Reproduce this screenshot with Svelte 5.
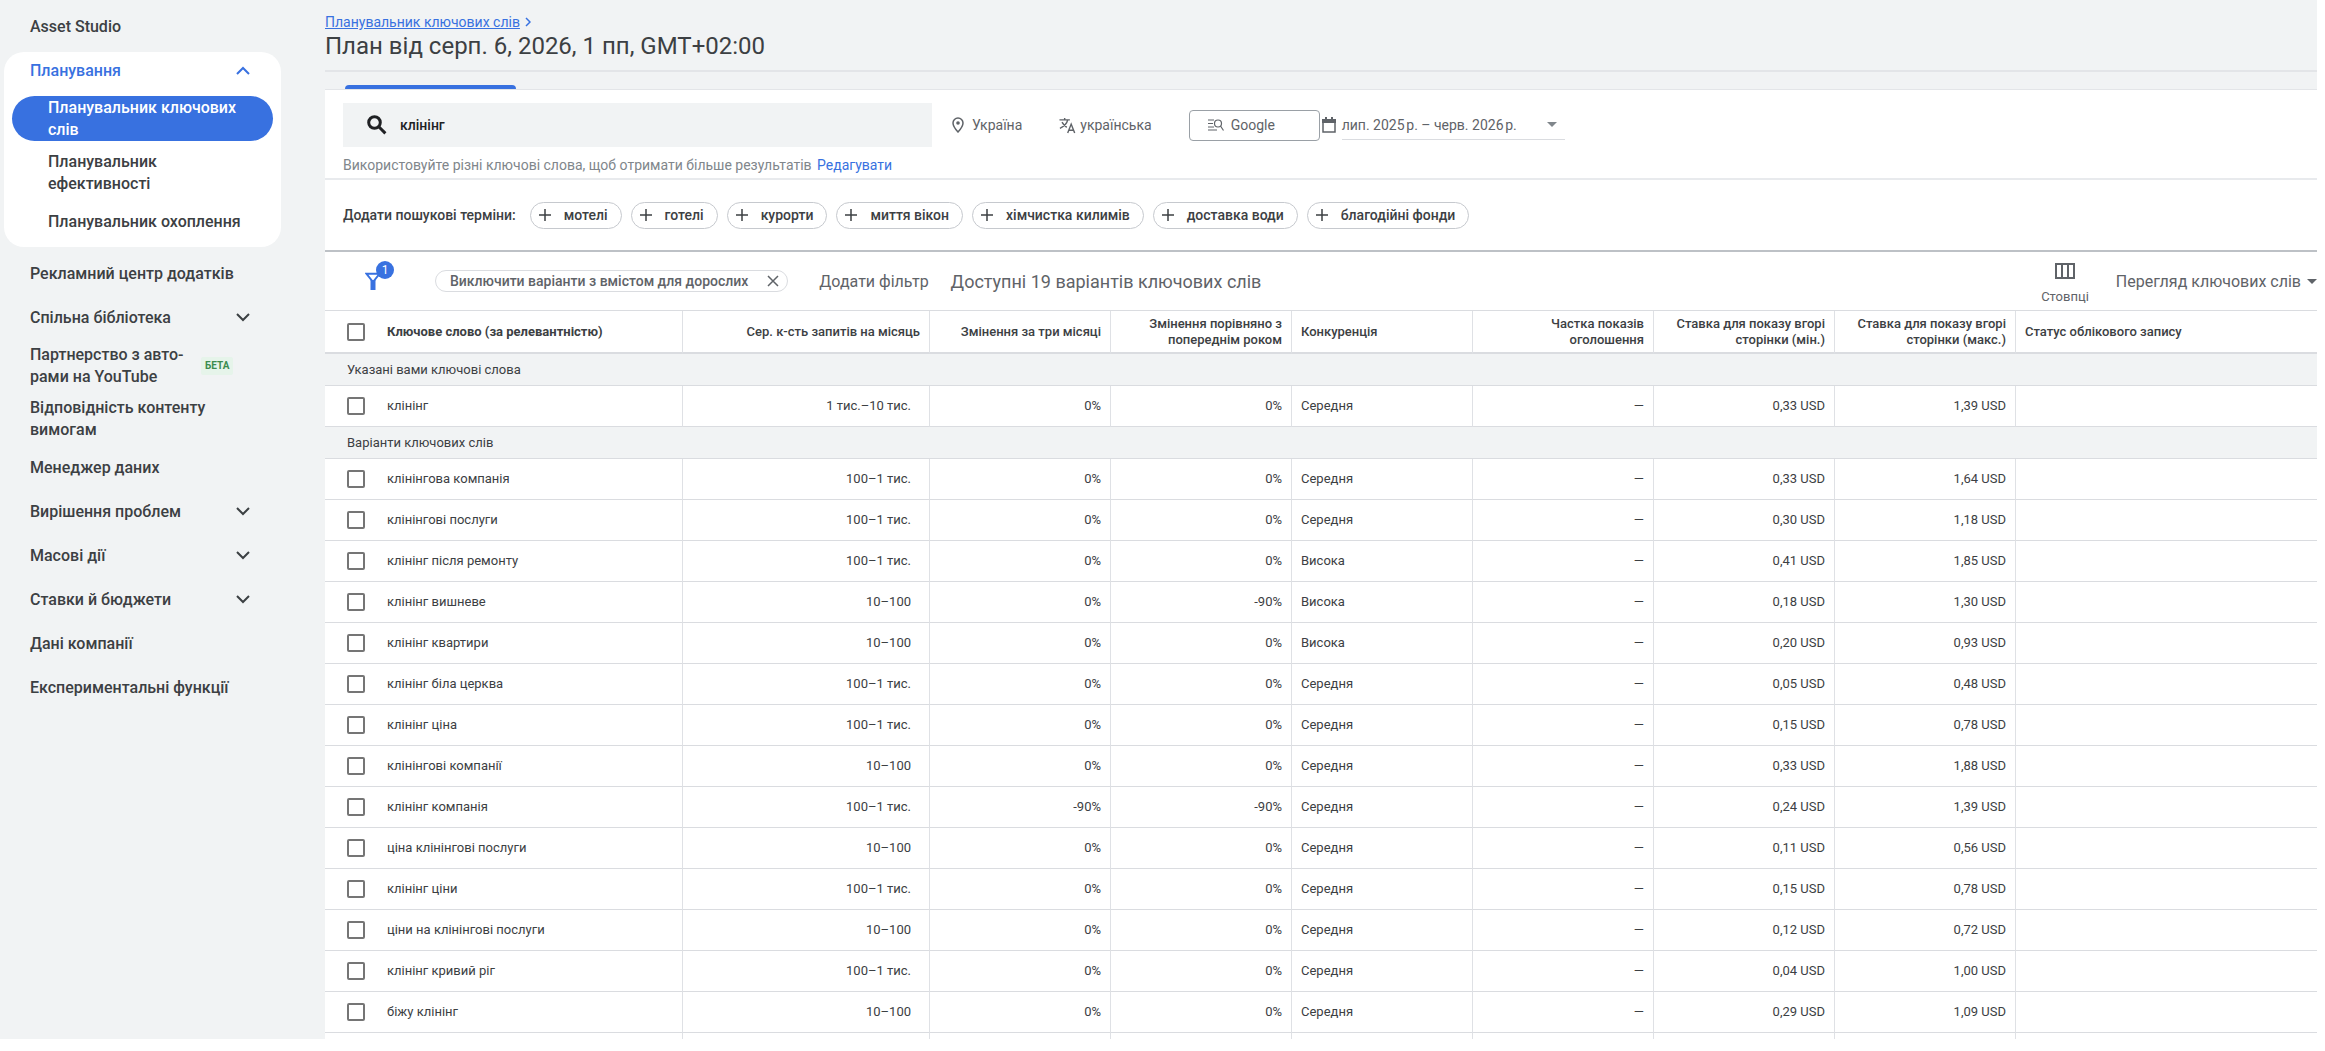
<script>
    let query = 'клінінг';
    let planningOpen = true;
    let filterActive = true;

    const planning = [
        { title: 'Планувальник ключових слів', active: true },
        { title: 'Планувальник ефективності', narrow: true },
        { title: 'Планувальник охоплення' },
    ];

    const menu = [
        { title: 'Рекламний центр додатків' },
        { title: 'Спільна бібліотека', expandable: true },
        { title: 'Партнерство з авто-рами на YouTube', beta: true },
        { title: 'Відповідність контенту вимогам' },
        { title: 'Менеджер даних' },
        { title: 'Вирішення проблем', expandable: true },
        { title: 'Масові дії', expandable: true },
        { title: 'Ставки й бюджети', expandable: true },
        { title: 'Дані компанії' },
        { title: 'Експериментальні функції' },
    ];

    const terms = ['мотелі', 'готелі', 'курорти', 'миття вікон', 'хімчистка килимів', 'доставка води', 'благодійні фонди'];

    // keyword, searches, three months, year, competition, low bid, high bid
    const groups = [
        {
            title: 'Указані вами ключові слова',
            rows: [['клінінг', '1 тис.–10 тис.', '0%', '0%', 'Середня', '0,33', '1,39']],
        },
        {
            title: 'Варіанти ключових слів',
            rows: [
                ['клінінгова компанія', '100–1 тис.', '0%', '0%', 'Середня', '0,33', '1,64'],
                ['клінінгові послуги', '100–1 тис.', '0%', '0%', 'Середня', '0,30', '1,18'],
                ['клінінг після ремонту', '100–1 тис.', '0%', '0%', 'Висока', '0,41', '1,85'],
                ['клінінг вишневе', '10–100', '0%', '-90%', 'Висока', '0,18', '1,30'],
                ['клінінг квартири', '10–100', '0%', '0%', 'Висока', '0,20', '0,93'],
                ['клінінг біла церква', '100–1 тис.', '0%', '0%', 'Середня', '0,05', '0,48'],
                ['клінінг ціна', '100–1 тис.', '0%', '0%', 'Середня', '0,15', '0,78'],
                ['клінінгові компанії', '10–100', '0%', '0%', 'Середня', '0,33', '1,88'],
                ['клінінг компанія', '100–1 тис.', '-90%', '-90%', 'Середня', '0,24', '1,39'],
                ['ціна клінінгові послуги', '10–100', '0%', '0%', 'Середня', '0,11', '0,56'],
                ['клінінг ціни', '100–1 тис.', '0%', '0%', 'Середня', '0,15', '0,78'],
                ['ціни на клінінгові послуги', '10–100', '0%', '0%', 'Середня', '0,12', '0,72'],
                ['клінінг кривий ріг', '100–1 тис.', '0%', '0%', 'Середня', '0,04', '1,00'],
                ['біжу клінінг', '10–100', '0%', '0%', 'Середня', '0,29', '1,09'],
            ],
        },
    ];
</script>

<div class="shell">
    <nav class="sidebar">
        <a href="#studio" class="item">Asset Studio</a>

        <div class="card">
            <button type="button" class="item head" on:click={() => planningOpen = !planningOpen}>
                <span>Планування</span>
                <svg class="chevron" viewBox="0 0 14 9"><path d="M1 8l6-6 6 6" /></svg>
            </button>
            {#if planningOpen}
                {#each planning as item}
                    <a href="#planning" class="sub" class:active={item.active} class:narrow={item.narrow}>{item.title}</a>
                {/each}
            {/if}
        </div>

        {#each menu as item}
            {#if item.expandable}
                <button type="button" class="item">
                    <span>{item.title}</span>
                    <svg class="chevron" viewBox="0 0 14 9"><path d="M1 1l6 6 6-6" /></svg>
                </button>
            {:else}
                <a href="#menu" class="item">
                    <span class:with-badge={item.beta}>{item.title}</span>
                    {#if item.beta}<span class="beta">БЕТА</span>{/if}
                </a>
            {/if}
        {/each}
    </nav>

    <main>
        <header>
            <div class="crumbs">
                <a href="#planner">Планувальник ключових слів</a>
                <svg viewBox="0 0 6 10"><path d="M1 1l4 4-4 4" /></svg>
            </div>
            <h1>План від серп. 6, 2026, 1 пп, GMT+02:00</h1>
        </header>
        <div class="tabs"><span class="tab"></span></div>

        <section class="search">
            <div class="search-row">
                <label class="search-box">
                    <svg viewBox="0 0 20 20"><circle cx="7.5" cy="7.5" r="5.8" /><path d="M11.8 11.8l6.6 6.6" /></svg>
                    <input type="text" aria-label="Ключові слова" bind:value={query}>
                </label>
                <button type="button" class="setting">
                    <svg class="pin" viewBox="0 0 12 16"><path d="M6 1a5 5 0 0 0-5 5c0 3.6 5 9 5 9s5-5.400 5-9a5 5 0 0 0-5-5z" /><circle class="dot" cx="6" cy="6" r="1.8" /></svg>
                    <span>Україна</span>
                </button>
                <button type="button" class="setting language">
                    <svg class="translate" viewBox="0 0 18 18"><path d="M.5 3h11M6 1v2M9.200 3C8.500 6.500 5 10 1 12M3.200 5.500C4.500 8 6 9.500 8.200 11M9.200 17l3.700-9.500L16.600 17M10.400 14h5" /></svg>
                    <span>українська</span>
                </button>
                <button type="button" class="network">
                    <svg viewBox="0 0 16 14"><path d="M0 2h6M0 5.500h5M0 9h6M0 12h9M15.500 12.500L12.500 8" /><circle cx="10" cy="5.500" r="3.500" /></svg>
                    <span>Google</span>
                </button>
                <button type="button" class="dates">
                    <svg class="calendar" viewBox="0 0 14 16"><path d="M1 3h12v12H1z" /><path class="solid" d="M0 2h14v4H0zM3 0h2v3H3zM9 0h2v3H9z" /></svg>
                    <span class="range">
                        <span>лип. 2025&#8239;р. – черв. 2026&#8239;р.</span>
                        <span class="caret"></span>
                    </span>
                </button>
            </div>
            <p class="hint">Використовуйте різні ключові слова, щоб отримати більше результатів <a href="#edit">Редагувати</a></p>
        </section>

        <section class="terms">
            <span class="terms-label">Додати пошукові терміни:</span>
            {#each terms as term}
                <button type="button" class="term">
                    <svg viewBox="0 0 14 14"><path d="M7 1v12M1 7h12" /></svg>
                    {term}
                </button>
            {/each}
        </section>

        <section class="filters">
            <button type="button" class="funnel" aria-label="Фільтри">
                <svg viewBox="0 0 16 18"><path d="M1.500 1.800h13L8 10z" /><path class="solid" d="M5.500 8h5v10h-5z" /></svg>
                <span class="count">1</span>
            </button>
            {#if filterActive}
                <span class="filter-chip">
                    Виключити варіанти з вмістом для дорослих
                    <button type="button" aria-label="Вилучити" on:click={() => filterActive = false}>
                        <svg viewBox="0 0 12 12"><path d="M1 1l10 10M11 1L1 11" /></svg>
                    </button>
                </span>
            {/if}
            <button type="button" class="add-filter">Додати фільтр</button>
            <span class="available">Доступні 19 варіантів ключових слів</span>
            <button type="button" class="columns">
                <svg viewBox="0 0 20 16"><path d="M1 1h18v14H1zM7 1v14M13 1v14" /></svg>
                Стовпці
            </button>
            <button type="button" class="view">
                Перегляд ключових слів
                <span class="caret"></span>
            </button>
        </section>

        <table>
            <colgroup>
                <col class="c-keyword">
                <col class="c-volume">
                <col class="c-value" span="6">
                <col>
            </colgroup>
            <thead>
                <tr>
                    <th class="keyword sorted">
                        <label><input type="checkbox"> Ключове слово (за релевантністю)</label>
                    </th>
                    <th class="num">Сер. к-сть запитів на місяць</th>
                    <th class="num">Змінення за три місяці</th>
                    <th class="num">Змінення порівняно з попереднім роком</th>
                    <th>Конкуренція</th>
                    <th class="num">Частка показів<br>оголошення</th>
                    <th class="num">Ставка для показу вгорі сторінки (мін.)</th>
                    <th class="num">Ставка для показу вгорі сторінки (макс.)</th>
                    <th>Статус облікового запису</th>
                </tr>
            </thead>
            <tbody>
                {#each groups as group}
                    <tr class="group"><td colspan="9">{group.title}</td></tr>
                    {#each group.rows as [keyword, volume, quarter, year, competition, low, high]}
                        <tr>
                            <td class="keyword"><label><input type="checkbox"> {keyword}</label></td>
                            <td class="num volume">{volume}</td>
                            <td class="num">{quarter}</td>
                            <td class="num">{year}</td>
                            <td>{competition}</td>
                            <td class="num">—</td>
                            <td class="num">{low} USD</td>
                            <td class="num">{high} USD</td>
                            <td></td>
                        </tr>
                    {/each}
                {/each}
                <!-- the next row is cut off by the bottom of the list -->
                <tr>
                    <td></td><td></td><td></td><td></td><td></td><td></td><td></td><td></td><td></td>
                </tr>
            </tbody>
        </table>
    </main>
</div>

<style>
    :global(body) {
        background: #fff;
    }

    .shell {
        display: flex;
        height: calc(100vh - 12px);
        margin-right: 8px;
        overflow: hidden;
        background: #f1f3f4;
        font-family: Roboto, "Liberation Sans", sans-serif;
        font-size: 13px;
        color: #3c4043;
    }

    * {
        box-sizing: border-box;
    }

    a {
        color: #3871e0;
        text-decoration: none;
    }

    button {
        padding: 0;
        border: none;
        background: none;
        font: inherit;
        color: inherit;
        text-align: left;
        white-space: nowrap;
        cursor: pointer;
    }

    svg {
        flex: none;
        fill: none;
        stroke: currentColor;
        stroke-width: 2;
    }

    .solid {
        fill: currentColor;
        stroke: none;
    }

    .caret {
        flex: none;
        border: 5px solid transparent;
        border-top-color: currentColor;
        border-bottom: none;
    }

    /* sidebar */
    .sidebar {
        flex: none;
        width: 325px;
        padding: 4px 44px 0 4px;
        font-size: 16px;
        line-height: 22px;
        font-weight: 500;
    }

    .item {
        display: flex;
        align-items: center;
        width: 100%;
        min-height: 44px;
        padding: 5px 31px 4px 26px;
        color: #3c4043;
    }

    .item > span:first-child {
        max-width: 210px;
        white-space: normal;
    }

    .item > span.with-badge {
        width: 158px;
    }

    .card {
        margin: 4px 0;
        padding-bottom: 4px;
        border-radius: 20px;
        background: #fff;
    }

    .item.head {
        min-height: 36px;
        color: #3871e0;
    }

    .chevron {
        width: 14px;
        height: 9px;
        margin-left: auto;
    }

    .sub {
        display: flex;
        align-items: center;
        min-height: 44px;
        margin: 0 8px;
        padding: 5px 28px 4px 36px;
        color: #3c4043;
    }

    .sub.active {
        margin: 8px 8px 5px;
        padding: 1px 28px 0 36px;
        border-radius: 23px;
        background: #3871e0;
        color: #fff;
    }

    .sub.narrow {
        padding-right: 80px;
    }

    .beta {
        margin-left: 13px;
        padding: 0 4px;
        border-radius: 2px;
        background: #e6f4ea;
        font-size: 10px;
        line-height: 18px;
        font-weight: 700;
        color: #3c8c50;
    }

    /* header */
    main {
        flex: 1;
        min-width: 0;
    }

    header {
        height: 72px;
        padding-top: 13px;
        border-bottom: 2px solid #e3e5e8;
    }

    .crumbs {
        display: flex;
        align-items: center;
        gap: 5px;
        font-size: 14px;
        line-height: 18px;
        color: #3871e0;
    }

    .crumbs a {
        text-decoration: underline;
    }

    .crumbs svg {
        width: 6px;
        height: 10px;
        stroke-width: 1.5;
    }

    h1 {
        margin: 0;
        font-size: 24px;
        line-height: 30px;
        font-weight: 400;
    }

    .tabs {
        display: flex;
        align-items: flex-end;
        height: 18px;
        padding-left: 20px;
        border-bottom: 1px solid #e3e5e8;
    }

    .tab {
        width: 171px;
        height: 4px;
        border-radius: 4px 4px 0 0;
        background: #3871e0;
    }

    /* search */
    .search {
        padding: 13px 18px 4px;
        border-bottom: 2px solid #e8eaed;
        background: #fff;
    }

    .search-row {
        display: flex;
        align-items: center;
        font-size: 14px;
        color: #5f6368;
    }

    .search-box {
        display: flex;
        align-items: center;
        gap: 13px;
        width: 589px;
        height: 44px;
        margin-right: 20px;
        padding-left: 24px;
        background: #f1f3f4;
        font-weight: 500;
        color: #202124;
    }

    .search-box svg {
        width: 20px;
        height: 20px;
        stroke-width: 3;
    }

    .search-box input {
        flex: 1;
        padding: 0;
        border: none;
        outline: none;
        background: transparent;
        font: inherit;
        color: inherit;
    }

    .setting {
        display: flex;
        align-items: center;
        gap: 8px;
    }

    .setting svg {
        stroke-width: 1.5;
    }

    .pin {
        width: 12px;
        height: 16px;
    }

    .pin .dot {
        fill: currentColor;
        stroke: none;
    }

    .language {
        gap: 4px;
        margin-left: 37px;
    }

    .translate {
        width: 17px;
        height: 17px;
    }

    .network {
        display: flex;
        align-items: center;
        gap: 7px;
        width: 131px;
        height: 31px;
        margin-left: 37px;
        padding-left: 18px;
        border: 1px solid #9aa0a6;
        border-radius: 4px;
    }

    .network svg {
        width: 16px;
        height: 14px;
        stroke-width: 1.2;
    }

    .dates {
        display: flex;
        align-items: center;
        gap: 6px;
        margin-left: 2px;
    }

    .calendar {
        width: 14px;
        height: 16px;
    }

    .calendar path:first-child {
        stroke-width: 1.5;
    }

    .range {
        display: flex;
        align-items: center;
        justify-content: space-between;
        width: 223px;
        height: 30px;
        padding-right: 8px;
        border-bottom: 1px solid #dadce0;
    }

    .range .caret {
        color: #80868b;
    }

    .hint {
        margin: 9px 0 0;
        font-size: 14px;
        line-height: 18px;
        color: #80868b;
    }

    .hint a {
        margin-left: 2px;
    }

    .terms {
        display: flex;
        align-items: center;
        gap: 9px;
        height: 72px;
        padding: 0 18px;
        border-bottom: 2px solid #bdc1c6;
        background: #fff;
        font-size: 14px;
        font-weight: 500;
    }

    .terms-label {
        margin-right: 5px;
    }

    .term {
        display: flex;
        align-items: center;
        gap: 12px;
        height: 27px;
        padding: 0 13px 0 7px;
        border: 1px solid #c6c9ce;
        border-radius: 14px;
    }

    .term svg {
        width: 14px;
        height: 14px;
        stroke-width: 1.5;
    }

    /* filters */
    .filters {
        display: flex;
        align-items: center;
        height: 58px;
        padding-left: 40px;
        background: #fff;
        font-size: 16px;
        color: #5f6368;
    }

    .funnel {
        position: relative;
        margin-right: 54px;
        color: #3871e0;
    }

    .funnel svg {
        display: block;
        width: 16px;
        height: 18px;
    }

    .count {
        position: absolute;
        top: -11px;
        left: 11px;
        width: 18px;
        border-radius: 9px;
        background: #3871e0;
        font-size: 12px;
        line-height: 18px;
        text-align: center;
        color: #fff;
    }

    .filter-chip {
        display: flex;
        align-items: center;
        gap: 19px;
        height: 22px;
        margin-right: 31px;
        padding: 0 8px 0 14px;
        border: 1px solid #dadce0;
        border-radius: 11px;
        font-size: 14px;
        font-weight: 500;
        white-space: nowrap;
    }

    .filter-chip button {
        display: flex;
    }

    .filter-chip svg {
        width: 12px;
        height: 12px;
        stroke-width: 1.5;
    }

    .add-filter {
        margin-right: 22px;
    }

    .available {
        margin-right: auto;
        font-size: 18px;
    }

    .columns {
        display: flex;
        flex-direction: column;
        align-items: center;
        gap: 10px;
        margin-right: 27px;
        padding-top: 4px;
        font-size: 13px;
    }

    .columns svg {
        width: 20px;
        height: 16px;
    }

    .view {
        display: flex;
        align-items: center;
        gap: 6px;
    }

    /* table */
    table {
        width: 100%;
        table-layout: fixed;
        border-collapse: separate;
        border-spacing: 0;
        border-top: 1px solid #dadce0;
        background: #fff;
    }

    .c-keyword {
        width: 358px;
    }

    .c-volume {
        width: 247px;
    }

    .c-value {
        width: 181px;
    }

    th, td {
        height: 41px;
        padding: 0 9px;
        border-right: 1px solid #dfe1e5;
        border-bottom: 1px solid #dadce0;
        line-height: 16px;
        text-align: left;
    }

    th:last-child, td:last-child {
        border-right: none;
    }

    th {
        height: 43px;
        border-bottom-width: 2px;
        font-weight: 500;
    }

    .sorted {
        font-weight: 700;
    }

    .num {
        text-align: right;
    }

    .volume {
        padding-right: 18px;
    }

    .keyword {
        padding-left: 22px;
    }

    .keyword label {
        display: flex;
        align-items: center;
        gap: 22px;
    }

    .group td {
        height: 32px;
        padding-left: 22px;
        background: #f1f3f4;
    }

    input[type="checkbox"] {
        appearance: none;
        width: 18px;
        height: 18px;
        margin: 0;
        border: 2px solid #757575;
        border-radius: 2px;
        background: #fff;
    }

    input[type="checkbox"]:checked {
        border-color: #3871e0;
        background: #3871e0;
    }
</style>
